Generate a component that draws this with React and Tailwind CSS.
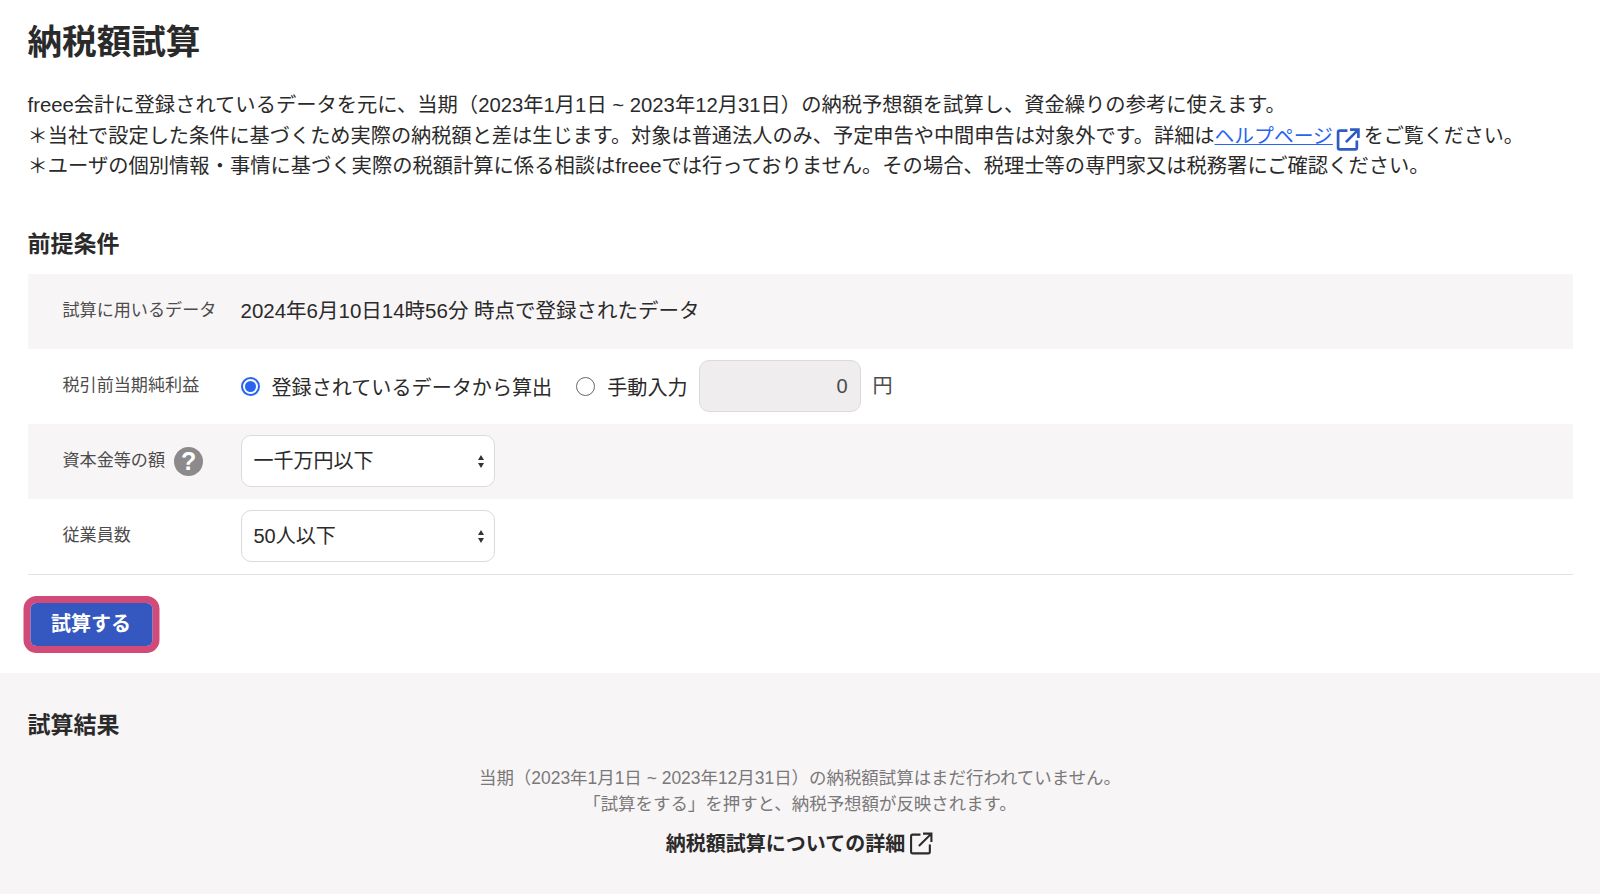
import React from "react";

const FONT = "font-['Liberation_Sans','Noto_Sans_CJK_JP',sans-serif]";

function ExternalIcon({ className, width = 2.2 }) {
  return (
    <svg viewBox="0 0 24 24" fill="none" stroke="currentColor" strokeWidth={width} className={className}>
      <path d="M11 3.5H3.5a1.5 1.5 0 0 0-1.5 1.5v15a1.5 1.5 0 0 0 1.5 1.5h15a1.5 1.5 0 0 0 1.5-1.5V13" />
      <path d="M9.5 14.5 21 3M13.5 2.5h8v8" />
    </svg>
  );
}

function Row({ label, gray, children, extra }) {
  return (
    <div className={`flex h-[75px] items-center pl-[35px] ${gray ? "bg-[#f7f5f6]" : ""}`}>
      <div className="flex w-[178px] items-center gap-[9px] text-[17.1px] text-[#4d4b4b]">
        {label}
        {extra}
      </div>
      {children}
    </div>
  );
}

function Select({ value }) {
  return (
    <div className="flex h-[52px] w-[254px] items-center justify-between rounded-[10px] border border-[#dcdadb] bg-white pl-3 pr-[9px] text-[20px] text-[#2b2a2a]">
      {value}
      <svg viewBox="0 0 8 14" className="h-[15px] w-2 fill-[#333]">
        <path d="M4 0.5 7 5.5H1ZM4 13.5 1 8.5H7Z" />
      </svg>
    </div>
  );
}

export default function App() {
  return (
    <div className={`flex min-h-[894px] flex-col bg-white text-[#2b2a2a] ${FONT}`}>
      <div className="px-[27.5px]">
        <h1 className="pt-[19px] text-[34.6px] leading-[46px] font-bold">納税額試算</h1>
        <div className="mt-[25px] text-[20.3px] leading-[30.6px] whitespace-nowrap">
          <p>freee会計に登録されているデータを元に、当期（2023年1月1日 ~ 2023年12月31日）の納税予想額を試算し、資金繰りの参考に使えます。</p>
          <p className="flex h-[30.6px] items-center text-[20.2px]">
            ＊当社で設定した条件に基づくため実際の納税額と差は生じます。対象は普通法人のみ、予定申告や中間申告は対象外です。詳細は
            <span className="text-[19.8px] text-[#2864f0] underline">ヘルプページ</span>
            <ExternalIcon width={2.6} className="mx-[3px] mt-[8px] h-[25px] w-[25px] text-[#2f5bc2]" />
            <span className="text-[20px]">をご覧ください。</span>
          </p>
          <p>＊ユーザの個別情報・事情に基づく実際の税額計算に係る相談はfreeeでは行っておりません。その場合、税理士等の専門家又は税務署にご確認ください。</p>
        </div>

        <h2 className="mt-[46px] text-[23px] leading-[32px] font-bold">前提条件</h2>
        <div className="mt-[14px] border-b border-[#e3e1e2]">
          <Row label="試算に用いるデータ" gray>
            <span className="text-[20.5px]">2024年6月10日14時56分 時点で登録されたデータ</span>
          </Row>
          <Row label="税引前当期純利益">
            <div className="flex items-center text-[20.1px]">
              <span className="flex h-[19px] w-[19px] items-center justify-center rounded-full border-2 border-[#2864f0] bg-white">
                <span className="h-[11px] w-[11px] rounded-full bg-[#2864f0]" />
              </span>
              <span className="mt-[3px] ml-[12px]">登録されているデータから算出</span>
              <span className="ml-[24px] h-[19px] w-[19px] rounded-full border border-[#666] bg-white" />
              <span className="mt-[3px] ml-[12px]">手動入力</span>
              <div className="ml-[11px] flex h-[52px] w-[162px] items-center justify-end rounded-[10px] border border-[#dcdadb] bg-[#efedee] pr-3 text-[#4d4b4b]">
                0
              </div>
              <span className="ml-3 text-[#4d4b4b]">円</span>
            </div>
          </Row>
          <Row
            label="資本金等の額"
            gray
            extra={
              <span className="flex h-[29px] w-[29px] items-center justify-center rounded-full bg-[#8c8a8b] text-[25px] font-bold text-white">?</span>
            }
          >
            <Select value="一千万円以下" />
          </Row>
          <Row label="従業員数">
            <Select value="50人以下" />
          </Row>
        </div>

        <div className="mt-[21px] mb-[20px] w-fit -translate-x-[4.5px] rounded-[13px] border-[7px] border-[#d24b78]">
          <button className="h-[43px] w-[122px] rounded-[6px] bg-[#3458bf] text-[20px] font-bold text-white">試算する</button>
        </div>
      </div>

      <div className="flex-1 bg-[#f7f5f6] px-[27.5px]">
        <h2 className="mt-[36px] text-[23px] leading-[32px] font-bold">試算結果</h2>
        <div className="mt-[24px] text-center text-[17.45px] leading-[26px] text-[#7a7879]">
          <p>当期（2023年1月1日 ~ 2023年12月31日）の納税額試算はまだ行われていません。</p>
          <p>「試算をする」を押すと、納税予想額が反映されます。</p>
        </div>
        <div className="mt-[12px] flex items-center justify-center gap-[4px] text-[20px] font-bold">
          納税額試算についての詳細
          <ExternalIcon width={2} className="h-[25px] w-[25px] text-[#2b2a2a]" />
        </div>
      </div>
    </div>
  );
}
